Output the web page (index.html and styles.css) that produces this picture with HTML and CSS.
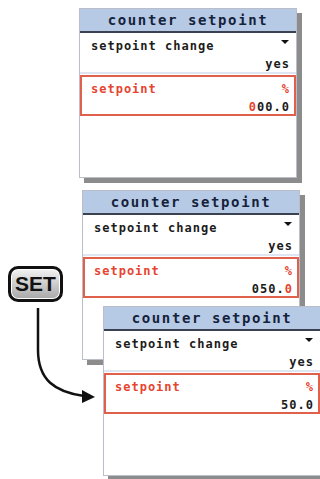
FILE: index.html
```html
<!DOCTYPE html>
<html lang="en">
<head>
<meta charset="UTF-8">
<title>Counter setpoint</title>
<link rel="stylesheet" href="styles.css">
</head>
<body>
<div class="figure">
    <div class="screen s1">
        <div class="title">counter setpoint</div>
        <div class="row">
            <div class="line"><span>setpoint change</span><span class="tri"></span></div>
            <div class="line right">yes</div>
        </div>
        <div class="row active">
            <div class="line"><span>setpoint</span><span>%</span></div>
            <div class="line right value"><span class="cur">0</span>00.0</div>
        </div>
    </div>

    <div class="screen s2">
        <div class="title">counter setpoint</div>
        <div class="row">
            <div class="line"><span>setpoint change</span><span class="tri"></span></div>
            <div class="line right">yes</div>
        </div>
        <div class="row active">
            <div class="line"><span>setpoint</span><span>%</span></div>
            <div class="line right value">050.<span class="cur">0</span></div>
        </div>
    </div>

    <div class="key">SET</div>
    <svg class="arrow" width="100" height="110" viewBox="0 0 100 110">
        <path d="M38 8 L38 50 C38 80 55 92 84 96" fill="none" stroke="#111" stroke-width="2.5"/>
        <polygon points="95,97 82,90 82,103" fill="#111"/>
    </svg>

    <div class="screen s3">
        <div class="title">counter setpoint</div>
        <div class="row">
            <div class="line"><span>setpoint change</span><span class="tri"></span></div>
            <div class="line right">yes</div>
        </div>
        <div class="row active">
            <div class="line"><span>setpoint</span><span>%</span></div>
            <div class="line right value">50.0</div>
        </div>
    </div>
</div>
</body>
</html>
```

FILE: styles.css
```css
body {
    margin: 0;
    background: #fff;
    font-family: 'DejaVu Sans Mono', monospace;
}
.figure {
    position: relative;
    width: 320px;
    height: 479px;
    overflow: hidden;
}
.screen {
    position: absolute;
    width: 218px;
    height: 170px;
    box-sizing: border-box;
    background: #fff;
    border: 1px solid #b9bec8;
    box-shadow: 5px 5px 0 #8c8c8c;
    display: flex;
    flex-direction: column;
}
.s1 { left: 79px; top: 8px; }
.s2 { left: 82px; top: 190px; }
.s3 { left: 103px; top: 306px; }
.title {
    height: 24px;
    box-sizing: border-box;
    background: #b6cae6;
    border-bottom: 2px solid #3a4252;
    color: #15223a;
    font-weight: bold;
    font-size: 14px;
    letter-spacing: 1.6px;
    text-align: center;
    line-height: 23px;
}
.row {
    height: 41px;
    box-sizing: border-box;
    padding: 4px 6px 0 11px;
    color: #1c1c1c;
    font-weight: bold;
    font-size: 12px;
    letter-spacing: 1px;
    border-bottom: 2px solid #dde6f2;
}
.row.active {
    margin: 1px 0 0;
    height: 41px;
    border: 2px solid #e0604c;
    padding: 3px 4px 0 9px;
    color: #e6442f;
}
.line {
    display: flex;
    justify-content: space-between;
    align-items: center;
    height: 17px;
}
.line.right {
    justify-content: flex-end;
    height: 19px;
}
.value {
    color: #1c1c1c;
}
.value .cur {
    color: #e6442f;
}
.tri {
    width: 0;
    height: 0;
    border-left: 4px solid transparent;
    border-right: 4px solid transparent;
    border-top: 4px solid #111;
    margin: 0 1px 8px 0;
}
.key {
    position: absolute;
    left: 8px;
    top: 266px;
    width: 55px;
    height: 36px;
    box-sizing: border-box;
    border: 3px solid #111;
    border-radius: 10px;
    background: linear-gradient(#f2f2f2, #a8a8a8);
    box-shadow: inset 0 0 0 1px #fff;
    display: flex;
    align-items: center;
    justify-content: center;
    font-family: 'Liberation Sans', Arial, sans-serif;
    font-weight: bold;
    font-size: 21px;
    color: #111;
}
.arrow {
    position: absolute;
    left: 0;
    top: 300px;
}
```
